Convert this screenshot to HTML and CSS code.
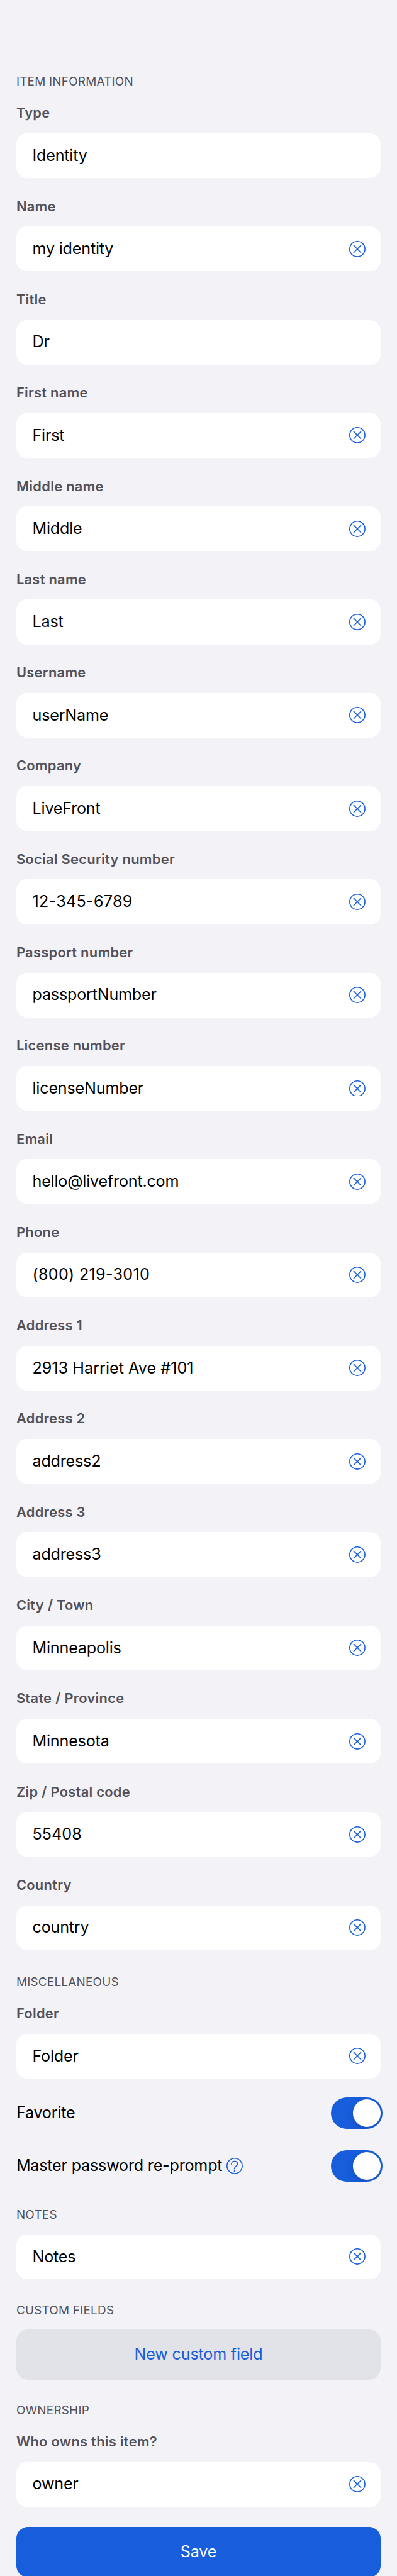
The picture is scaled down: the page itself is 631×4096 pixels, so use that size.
FILE: index.html
```
<!DOCTYPE html>
<html lang="en">
<head>
<meta charset="utf-8">
<title>Identity</title>
<link rel="stylesheet" href="styles.css">
</head>
<body>
<svg class="sprite" aria-hidden="true">
  <symbol id="clear" viewBox="0 0 48 48"><circle cx="24" cy="24" r="22.5"/><path d="M13.7 13.7 34.3 34.3M34.3 13.7 13.7 34.3"/></symbol>
  <symbol id="help" viewBox="0 0 48 48"><circle cx="24" cy="24" r="22.5"/><path d="M14.7 19.3C14.7 13.6 18 10.3 23.5 10.3C29 10.3 32.3 13.6 32.3 18.3C32.3 25.5 23.4 24.5 23.4 33"/><circle class="dot" cx="23.5" cy="39.3" r="2"/></symbol>
</svg>
<main class="form">
  <section class="section">
    <h2 class="heading">ITEM INFORMATION</h2>
    <div class="fields">
      <div class="field"><div class="label">Type</div><div class="box"><span class="value">Identity</span></div></div>
      <div class="field"><div class="label">Name</div><div class="box"><span class="value">my identity</span><svg class="icon"><use href="#clear"/></svg></div></div>
      <div class="field"><div class="label">Title</div><div class="box"><span class="value">Dr</span></div></div>
      <div class="field"><div class="label">First name</div><div class="box"><span class="value">First</span><svg class="icon"><use href="#clear"/></svg></div></div>
      <div class="field"><div class="label">Middle name</div><div class="box"><span class="value">Middle</span><svg class="icon"><use href="#clear"/></svg></div></div>
      <div class="field"><div class="label">Last name</div><div class="box"><span class="value">Last</span><svg class="icon"><use href="#clear"/></svg></div></div>
      <div class="field"><div class="label">Username</div><div class="box"><span class="value">userName</span><svg class="icon"><use href="#clear"/></svg></div></div>
      <div class="field"><div class="label">Company</div><div class="box"><span class="value">LiveFront</span><svg class="icon"><use href="#clear"/></svg></div></div>
      <div class="field"><div class="label">Social Security number</div><div class="box"><span class="value numeric">12-345-6789</span><svg class="icon"><use href="#clear"/></svg></div></div>
      <div class="field"><div class="label">Passport number</div><div class="box"><span class="value">passportNumber</span><svg class="icon"><use href="#clear"/></svg></div></div>
      <div class="field"><div class="label">License number</div><div class="box"><span class="value">licenseNumber</span><svg class="icon"><use href="#clear"/></svg></div></div>
      <div class="field"><div class="label">Email</div><div class="box"><span class="value">hello@livefront.com</span><svg class="icon"><use href="#clear"/></svg></div></div>
      <div class="field"><div class="label">Phone</div><div class="box"><span class="value numeric">(800) 219-3010</span><svg class="icon"><use href="#clear"/></svg></div></div>
      <div class="field"><div class="label">Address 1</div><div class="box"><span class="value mixed">2913 Harriet Ave #101</span><svg class="icon"><use href="#clear"/></svg></div></div>
      <div class="field"><div class="label">Address 2</div><div class="box"><span class="value">address2</span><svg class="icon"><use href="#clear"/></svg></div></div>
      <div class="field"><div class="label">Address 3</div><div class="box"><span class="value">address3</span><svg class="icon"><use href="#clear"/></svg></div></div>
      <div class="field"><div class="label">City / Town</div><div class="box"><span class="value">Minneapolis</span><svg class="icon"><use href="#clear"/></svg></div></div>
      <div class="field"><div class="label">State / Province</div><div class="box"><span class="value">Minnesota</span><svg class="icon"><use href="#clear"/></svg></div></div>
      <div class="field"><div class="label">Zip / Postal code</div><div class="box"><span class="value mixed">55408</span><svg class="icon"><use href="#clear"/></svg></div></div>
      <div class="field"><div class="label">Country</div><div class="box"><span class="value">country</span><svg class="icon"><use href="#clear"/></svg></div></div>
    </div>
  </section>
  <section class="section misc">
    <h2 class="heading">MISCELLANEOUS</h2>
    <div class="field"><div class="label">Folder</div><div class="box"><span class="value">Folder</span><svg class="icon"><use href="#clear"/></svg></div></div>
    <div class="toggles">
      <div class="toggle-row"><span class="toggle-label">Favorite</span><span class="switch"><span class="knob"></span></span></div>
      <div class="toggle-row"><span class="toggle-label">Master password re-prompt</span><svg class="icon help"><use href="#help"/></svg><span class="switch"><span class="knob"></span></span></div>
    </div>
  </section>
  <section class="section notes">
    <h2 class="heading">NOTES</h2>
    <div class="box"><span class="value">Notes</span><svg class="icon"><use href="#clear"/></svg></div>
  </section>
  <section class="section custom">
    <h2 class="heading">CUSTOM FIELDS</h2>
    <button class="button secondary">New custom field</button>
  </section>
  <section class="section ownership">
    <h2 class="heading">OWNERSHIP</h2>
    <div class="field"><div class="label">Who owns this item?</div><div class="box"><span class="value">owner</span><svg class="icon"><use href="#clear"/></svg></div></div>
  </section>
  <button class="button primary">Save</button>
</main>
</body>
</html>
```
FILE: styles.css
```
html {
  font-size: calc(100vw / 117);
  background: #f2f2f7;
}

* {
  box-sizing: border-box;
}

body {
  margin: 0;
  height: 100vh;
  overflow: hidden;
  font-family: Inter, "Liberation Sans", sans-serif;
  color: #000;
}

.sprite {
  display: none;
}

.form {
  display: flex;
  flex-direction: column;
  padding: 22.14rem 4.8rem 0;
}

.heading {
  margin: 0 0 4.5rem;
  font-size: 3.5rem;
  line-height: 4.2rem;
  font-weight: 400;
  letter-spacing: 0.045rem;
  color: #525159;
}

.fields {
  display: flex;
  flex-direction: column;
  gap: 5.84rem;
}

.label {
  margin-bottom: 3.46rem;
  font-size: 4.06rem;
  line-height: 5rem;
  font-weight: 600;
  letter-spacing: 0.05rem;
  color: #525159;
}

.box {
  display: flex;
  align-items: center;
  justify-content: space-between;
  height: 13.2rem;
  padding: 0 4.5rem 0 4.75rem;
  border-radius: 3.1rem;
  background: #fff;
}

.value,
.toggle-label {
  padding-bottom: 0.2rem;
  font-size: 4.66rem;
  line-height: 6rem;
  letter-spacing: -0.037rem;
  white-space: nowrap;
}

.numeric {
  letter-spacing: 0.055rem;
}

.mixed {
  letter-spacing: 0.006rem;
}

.icon {
  flex: none;
  width: 4.8rem;
  height: 4.8rem;
  fill: none;
  stroke: #175ddc;
  stroke-width: 3;
  stroke-linecap: round;
}

.dot {
  fill: #175ddc;
  stroke: none;
}

.misc {
  margin-top: 7.49rem;
}

.toggles {
  display: flex;
  flex-direction: column;
  gap: 6.2rem;
  margin-top: 5.6rem;
}

.toggle-row {
  display: flex;
  align-items: center;
  height: 9.3rem;
  margin-right: -0.6rem;
}

.help {
  margin-left: 1.2rem;
}

.switch {
  display: flex;
  justify-content: flex-end;
  width: 15.3rem;
  height: 9.3rem;
  margin-left: auto;
  padding: 0.6rem;
  border-radius: 4.65rem;
  background: #175ddc;
  overflow: hidden;
}

.knob {
  width: 8.1rem;
  height: 8.1rem;
  border-radius: 50%;
  background: #fff;
  box-shadow: 0 0.9rem 2.4rem rgba(0, 0, 0, 0.15);
}

.notes {
  margin-top: 7.86rem;
}

.notes .heading,
.custom .heading {
  margin-bottom: 3.5rem;
}

.custom {
  margin-top: 7.16rem;
}

.ownership {
  margin-top: 7.08rem;
}

.button {
  display: flex;
  align-items: center;
  justify-content: center;
  width: 100%;
  height: 14.8rem;
  padding: 0 0 0.2rem;
  border: 0;
  border-radius: 3.4rem;
  font: 400 4.66rem/6rem Inter, "Liberation Sans", sans-serif;
  letter-spacing: -0.035rem;
}

.secondary {
  background: #e2e3e8;
  color: #175ddc;
}

.primary {
  flex: none;
  margin-top: 6rem;
  background: #175ddc;
  color: #fff;
}
```
